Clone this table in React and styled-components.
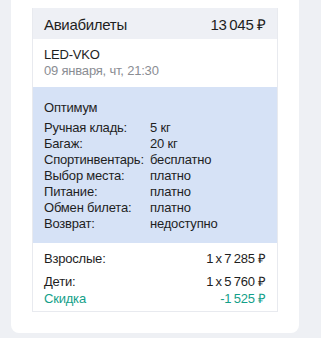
import React from "react";
import styled, { createGlobalStyle } from "styled-components";

const Global = createGlobalStyle`
  html, body { margin: 0; padding: 0; background: #eef0f4; }
  body { font-family: "Liberation Sans", Arial, sans-serif; color: #1e1e1e; }
`;

const Card = styled.div`
  width: 288px;
  margin-left: 11px;
  background: #fff;
  border-radius: 0 0 8px 8px;
  padding: 8px 21px 21px;
  box-sizing: border-box;
`;

const Box = styled.div`
  border: 1px solid #e8eaef;
  border-top: none;
`;

const Header = styled.div`
  display: flex;
  justify-content: space-between;
  align-items: center;
  height: 31px;
  padding: 1px 11px 0;
  box-sizing: border-box;
  background: #eef0f5;
  font-size: 15px;
  letter-spacing: -0.3px;
`;

const Section = styled.div`
  padding: ${(p) => p.$pad};
  background: ${(p) => p.$bg || "transparent"};
  font-size: 13px;
  line-height: 16px;
  letter-spacing: -0.2px;
`;

const Muted = styled.div`
  color: #8a8d93;
`;

const Title = styled.div`
  margin-bottom: 4px;
`;

const Grid = styled.div`
  display: grid;
  grid-template-columns: 106px 1fr;
`;

const Row = styled.div`
  display: flex;
  justify-content: space-between;
  color: ${(p) => (p.$green ? "#13a089" : "inherit")};
  margin-top: ${(p) => p.$mt || 0}px;
`;

const T = "\u2009";

const rows = [
  ["Ручная кладь:", "5 кг"],
  ["Багаж:", "20 кг"],
  ["Спортинвентарь:", "бесплатно"],
  ["Выбор места:", "платно"],
  ["Питание:", "платно"],
  ["Обмен билета:", "платно"],
  ["Возврат:", "недоступно"],
];

export default function App() {
  return (
    <>
      <Global />
      <Card>
        <Box>
          <Header>
            <span>Авиабилеты</span>
            <span>{`13${T}045 ₽`}</span>
          </Header>
          <Section $pad="8px 11px">
            <div>LED-VKO</div>
            <Muted>09 января, чт, 21:30</Muted>
          </Section>
          <Section $pad="13px 11px 11px" $bg="#d6e2f6">
            <Title>Оптимум</Title>
            <Grid>
              {rows.map(([k, v]) => (
                <React.Fragment key={k}>
                  <span>{k}</span>
                  <span>{v}</span>
                </React.Fragment>
              ))}
            </Grid>
          </Section>
          <Section $pad="8px 11px 4px">
            <Row>
              <span>Взрослые:</span>
              <span>{`1${T}x${T}7${T}285 ₽`}</span>
            </Row>
            <Row $mt={7}>
              <span>Дети:</span>
              <span>{`1${T}x${T}5${T}760 ₽`}</span>
            </Row>
            <Row $green $mt={1}>
              <span>Скидка</span>
              <span>{`-1${T}525 ₽`}</span>
            </Row>
          </Section>
        </Box>
      </Card>
    </>
  );
}
